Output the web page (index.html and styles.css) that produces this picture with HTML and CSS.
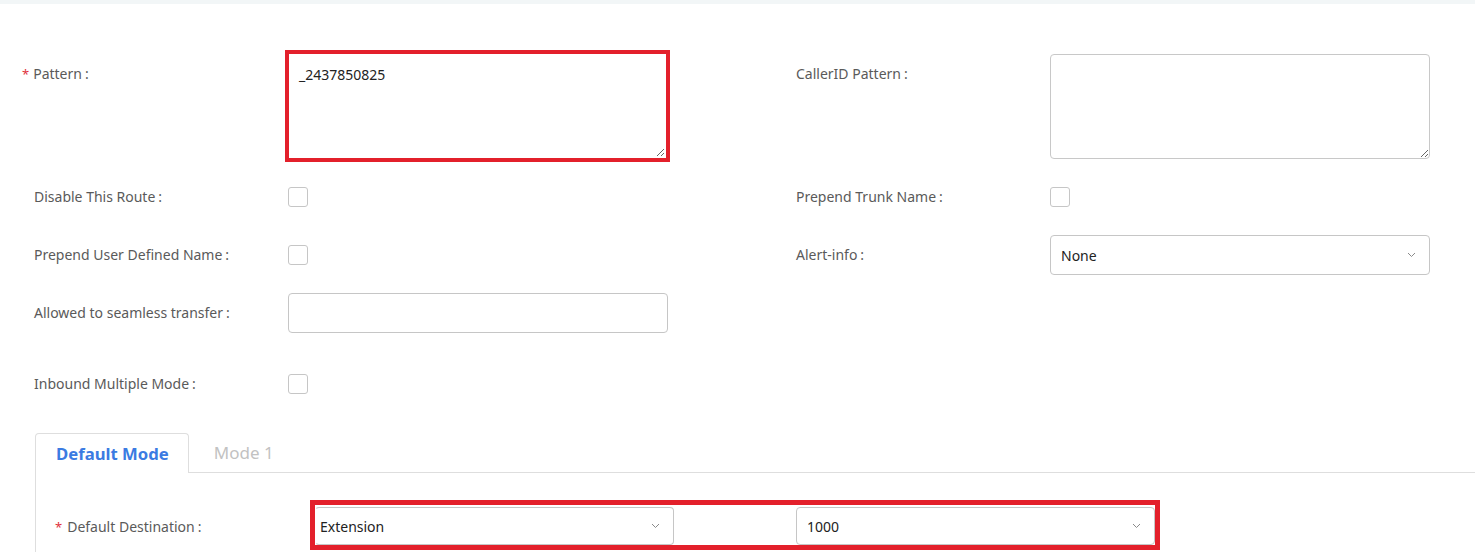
FILE: index.html
```html
<!DOCTYPE html>
<html lang="en">
<head>
<meta charset="utf-8">
<title>Inbound Route</title>
<link rel="stylesheet" href="styles.css">
</head>
<body>
<div class="topbar"></div>
<div class="form">
  <div class="row row-tall">
    <div class="field">
      <label class="label"><span class="req">*</span>Pattern<span class="colon">:</span></label>
      <div class="highlight"><textarea class="textarea">_2437850825</textarea></div>
    </div>
    <div class="field">
      <label class="label">CallerID Pattern<span class="colon">:</span></label>
      <textarea class="textarea"></textarea>
    </div>
  </div>
  <div class="row">
    <div class="field">
      <label class="label">Disable This Route<span class="colon">:</span></label>
      <span class="checkbox"></span>
    </div>
    <div class="field">
      <label class="label">Prepend Trunk Name<span class="colon">:</span></label>
      <span class="checkbox"></span>
    </div>
  </div>
  <div class="row">
    <div class="field">
      <label class="label">Prepend User Defined Name<span class="colon">:</span></label>
      <span class="checkbox"></span>
    </div>
    <div class="field">
      <label class="label">Alert-info<span class="colon">:</span></label>
      <div class="select"><span class="select-text">None</span>
        <svg class="chev" width="9" height="6" viewBox="0 0 9 6"><path d="M1 1 L4.5 4.5 L8 1" fill="none" stroke="#8a8a8a" stroke-width="1"/></svg>
      </div>
    </div>
  </div>
  <div class="row">
    <div class="field">
      <label class="label">Allowed to seamless transfer<span class="colon">:</span></label>
      <input class="input" type="text">
    </div>
  </div>
  <div class="row row-gap">
    <div class="field">
      <label class="label">Inbound Multiple Mode<span class="colon">:</span></label>
      <span class="checkbox"></span>
    </div>
  </div>
</div>
<div class="tabs">
  <div class="tabbar">
    <div class="tab tab-active">Default Mode</div>
    <div class="tab">Mode 1</div>
    <div class="tab-fill"></div>
  </div>
  <div class="panel">
    <div class="dest-row">
      <label class="dest-label"><span class="req req-inline">*</span>Default Destination<span class="colon">:</span></label>
      <div class="dest-controls">
        <div class="select select-dest"><span class="select-text">Extension</span>
          <svg class="chev" width="9" height="6" viewBox="0 0 9 6"><path d="M1 1 L4.5 4.5 L8 1" fill="none" stroke="#8a8a8a" stroke-width="1"/></svg>
        </div>
        <div class="select select-dest"><span class="select-text">1000</span>
          <svg class="chev" width="9" height="6" viewBox="0 0 9 6"><path d="M1 1 L4.5 4.5 L8 1" fill="none" stroke="#8a8a8a" stroke-width="1"/></svg>
        </div>
      </div>
    </div>
  </div>
</div>
</body>
</html>
```

FILE: styles.css
```css
html, body {
  margin: 0;
  padding: 0;
  background: #ffffff;
  overflow: hidden;
}
body {
  font-family: "Noto Sans", "Open Sans", "Liberation Sans", sans-serif;
  font-size: 14px;
  color: #555555;
  width: 1475px;
  height: 552px;
}
.topbar {
  height: 4px;
  background: #f2f6f7;
}
.form {
  padding: 50px 0 0 34px;
}
.row {
  display: flex;
  align-items: flex-start;
  min-height: 40px;
  margin-bottom: 18px;
}
.row-tall {
  min-height: 105px;
}
.row-gap {
  margin-top: 31px;
  margin-bottom: 0;
}
.field {
  display: flex;
  align-items: center;
  flex: none;
  width: 762px;
  min-height: 40px;
}
.field + .field {
  width: auto;
}
.row-tall .field {
  align-items: flex-start;
}
.label {
  width: 254px;
  flex: none;
  line-height: 40px;
  white-space: nowrap;
  color: #5a5a5a;
}
.req {
  color: #e0323c;
  margin-left: -12px;
  margin-right: 4px;
  font-size: 13px;
}
.req-inline {
  margin-left: 0;
  margin-right: 5px;
}
.colon {
  margin-left: 3px;
}
.textarea {
  display: block;
  box-sizing: border-box;
  width: 380px;
  height: 105px;
  border: 1px solid #c8c8c8;
  border-radius: 4px;
  padding: 9px 9px;
  margin: 0;
  font-family: "Noto Sans", "Open Sans", "Liberation Sans", sans-serif;
  font-size: 14px;
  line-height: 22px;
  color: #222222;
  resize: vertical;
  background: #fff;
}
.highlight {
  border: 4px solid #e3202b;
  margin: -4px -2px -3px -3px;
}
.highlight .textarea {
  width: 377px;
  height: 104px;
  border-color: #ffffff;
}
.checkbox {
  display: block;
  box-sizing: border-box;
  width: 20px;
  height: 20px;
  border: 1px solid #c6c6c6;
  border-radius: 3px;
  background: #fff;
}
.input {
  box-sizing: border-box;
  width: 380px;
  height: 40px;
  border: 1px solid #c6c6c6;
  border-radius: 4px;
  margin: 0;
  padding: 0 10px;
  font-family: inherit;
  font-size: 14px;
  background: #fff;
}
.select {
  box-sizing: border-box;
  width: 380px;
  height: 40px;
  border: 1px solid #c6c6c6;
  border-radius: 4px;
  display: flex;
  align-items: center;
  justify-content: space-between;
  padding: 0 13px 0 10px;
  background: #fff;
}
.select-text {
  color: #222222;
}
.chev {
  display: block;
}
.tabs {
  margin: 29px 0 0 35px;
}
.tabbar {
  display: flex;
  align-items: stretch;
  height: 40px;
}
.tab {
  box-sizing: border-box;
  padding: 0 25px 0 25px;
  display: flex;
  align-items: center;
  font-size: 17px;
  color: #c2c2c2;
  border-bottom: 1px solid #dedede;
}
.tab-active {
  padding: 0 19px 0 20px;
  border: 1px solid #dedede;
  border-bottom: none;
  border-radius: 4px 4px 0 0;
  color: #3b7be2;
  font-weight: 700;
  font-size: 16.7px;
}
.tab-fill {
  flex: 1;
  border-bottom: 1px solid #dedede;
}
.panel {
  border-left: 1px solid #dedede;
  padding: 34px 0 20px 19px;
}
.dest-row {
  display: flex;
  align-items: center;
}
.dest-label {
  width: 260px;
  flex: none;
  white-space: nowrap;
  color: #5a5a5a;
}
.dest-controls {
  display: flex;
  gap: 122px;
  border: 5px solid #e3202b;
  margin: -7px -3px -4px -5px;
  padding: 2px 0 0 0;
}
.select-dest {
  width: 359px;
  height: 38px;
}
.select-dest:first-child {
  border-left-color: transparent;
  padding-left: 4px;
}
```
